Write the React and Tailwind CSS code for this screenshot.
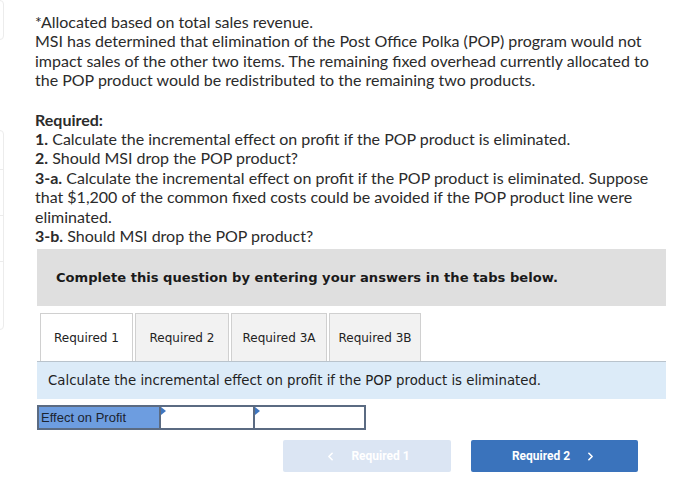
import React from "react";
import { ChevronLeft, ChevronRight } from "lucide-react";

const tabs = [
  { label: "Required 1", w: "w-[93px]" },
  { label: "Required 2", w: "w-[94px]" },
  { label: "Required 3A", w: "w-[96px]" },
  { label: "Required 3B", w: "w-[92px]" },
];

function InputCell({ last }) {
  return (
    <div
      className={`relative h-full border-2 border-[#5b6b82] bg-white ${last ? "w-[113px]" : "w-[94px] border-r-0"}`}
    >
      <span className="absolute left-0 top-0 h-0 w-0 border-y-[4px] border-l-[5px] border-y-transparent border-l-[#3f76c0]" />
    </div>
  );
}

export default function App() {
  return (
    <div className="relative h-[488px] w-[700px] overflow-hidden bg-white">
      {/* faint cards at left edge */}
      <div className="absolute -left-2 top-0 h-[40px] w-[12px] rounded border border-[#ececec]" />
      <div className="absolute -left-2 top-[130px] h-[200px] w-[12px] rounded border border-[#ececec]">
        <div className="mt-[38px] border-t border-[#ececec]" />
        <div className="mt-[45px] border-t border-[#ececec]" />
        <div className="mt-[45px] border-t border-[#ececec]" />
      </div>

      <div className="pl-[35px] pr-[30px] pt-[12px] font-['Lato',sans-serif] text-[16px] leading-[19.4px] text-[#2b2b2b]">
        <p>*Allocated based on total sales revenue.</p>
        <p>
          MSI has determined that elimination of the Post Office Polka (POP) program would not impact sales of the
          other two items. The remaining fixed overhead currently allocated to the POP product would be redistributed
          to the remaining two products.
        </p>
        <div className="mt-[20px]">
          <p className="font-bold">Required:</p>
          <p>
            <b>1.</b> Calculate the incremental effect on profit if the POP product is eliminated.
          </p>
          <p>
            <b>2.</b> Should MSI drop the POP product?
          </p>
          <p>
            <b>3-a.</b> Calculate the incremental effect on profit if the POP product is eliminated. Suppose that
            $1,200 of the common fixed costs could be avoided if the POP product line were eliminated.
          </p>
          <p>
            <b>3-b.</b> Should MSI drop the POP product?
          </p>
        </div>
      </div>

      <div className="ml-[37px] mt-[4px] w-[629px]">
        <div className="flex h-[57px] items-center bg-[#dfdfdf] pl-[19px] font-['DejaVu_Sans',sans-serif] text-[13.1px] font-bold text-[#1a1a1a]">
          Complete this question by entering your answers in the tabs below.
        </div>

        <div className="mt-[7px] flex h-[48px] items-end gap-[2px] pl-[3px] font-['DejaVu_Sans',sans-serif] text-[12px] text-[#222]">
          {tabs.map((t, i) => (
            <div
              key={t.label}
              className={`flex h-[48px] items-center justify-center border border-b-0 border-[#d0d0d0] ${t.w} ${
                i === 0 ? "bg-white" : "bg-[#f2f2f2]"
              }`}
            >
              {t.label}
            </div>
          ))}
        </div>

        <div className="flex h-[38px] items-center border-t border-[#b9c3cc] bg-[#dcebf8] pl-[11px] font-['DejaVu_Sans',sans-serif] text-[13.3px] text-[#222]">
          Calculate the incremental effect on profit if the POP product is eliminated.
        </div>

        <div className="mt-[6px] flex h-[25px]">
          <div className="flex w-[122px] items-center border-2 border-r-0 border-[#5b6b82] bg-[#6d9de0] pl-[2px] font-['Liberation_Sans',sans-serif] text-[13px] text-[#1c2430]">
            Effect on Profit
          </div>
          <InputCell />
          <InputCell last />
        </div>

        <div className="mt-[10px] flex gap-[20px] pl-[246px] font-['Roboto',sans-serif] text-[12px] font-bold text-white">
          <div className="flex h-[32px] w-[168px] items-center justify-center gap-[14px] rounded-[2px] bg-[#dbe5f3]">
            <ChevronLeft size={13} strokeWidth={3} />
            <span>Required 1</span>
          </div>
          <div className="flex h-[32px] w-[167px] items-center justify-center gap-[14px] rounded-[2px] bg-[#3a73bc]">
            <span>Required 2</span>
            <ChevronRight size={13} strokeWidth={3} />
          </div>
        </div>
      </div>
    </div>
  );
}
